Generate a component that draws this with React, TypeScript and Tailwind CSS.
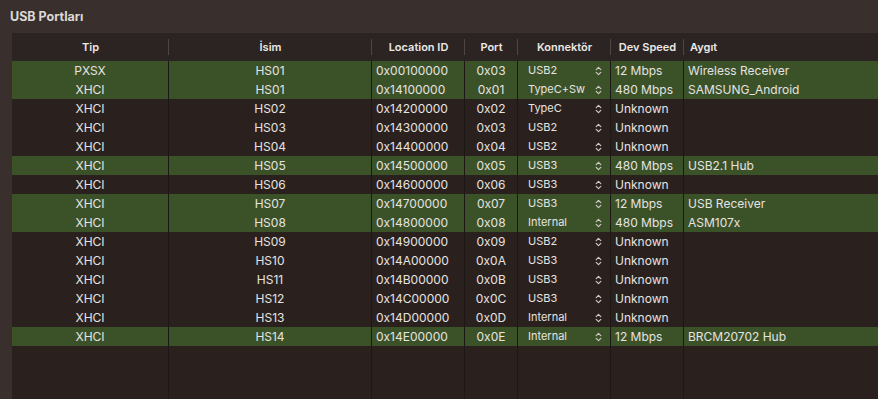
import React from "react";

type Row = {
  tip: string;
  isim: string;
  loc: string;
  port: string;
  conn: string;
  speed: string;
  device: string;
  active: boolean;
};

const rows: Row[] = [
  { tip: "PXSX", isim: "HS01", loc: "0x00100000", port: "0x03", conn: "USB2", speed: "12 Mbps", device: "Wireless Receiver", active: true },
  { tip: "XHCI", isim: "HS01", loc: "0x14100000", port: "0x01", conn: "TypeC+Sw", speed: "480 Mbps", device: "SAMSUNG_Android", active: true },
  { tip: "XHCI", isim: "HS02", loc: "0x14200000", port: "0x02", conn: "TypeC", speed: "Unknown", device: "", active: false },
  { tip: "XHCI", isim: "HS03", loc: "0x14300000", port: "0x03", conn: "USB2", speed: "Unknown", device: "", active: false },
  { tip: "XHCI", isim: "HS04", loc: "0x14400000", port: "0x04", conn: "USB2", speed: "Unknown", device: "", active: false },
  { tip: "XHCI", isim: "HS05", loc: "0x14500000", port: "0x05", conn: "USB3", speed: "480 Mbps", device: "USB2.1 Hub", active: true },
  { tip: "XHCI", isim: "HS06", loc: "0x14600000", port: "0x06", conn: "USB3", speed: "Unknown", device: "", active: false },
  { tip: "XHCI", isim: "HS07", loc: "0x14700000", port: "0x07", conn: "USB3", speed: "12 Mbps", device: "USB Receiver", active: true },
  { tip: "XHCI", isim: "HS08", loc: "0x14800000", port: "0x08", conn: "Internal", speed: "480 Mbps", device: "ASM107x", active: true },
  { tip: "XHCI", isim: "HS09", loc: "0x14900000", port: "0x09", conn: "USB2", speed: "Unknown", device: "", active: false },
  { tip: "XHCI", isim: "HS10", loc: "0x14A00000", port: "0x0A", conn: "USB3", speed: "Unknown", device: "", active: false },
  { tip: "XHCI", isim: "HS11", loc: "0x14B00000", port: "0x0B", conn: "USB3", speed: "Unknown", device: "", active: false },
  { tip: "XHCI", isim: "HS12", loc: "0x14C00000", port: "0x0C", conn: "USB3", speed: "Unknown", device: "", active: false },
  { tip: "XHCI", isim: "HS13", loc: "0x14D00000", port: "0x0D", conn: "Internal", speed: "Unknown", device: "", active: false },
  { tip: "XHCI", isim: "HS14", loc: "0x14E00000", port: "0x0E", conn: "Internal", speed: "12 Mbps", device: "BRCM20702 Hub", active: true },
];

const grid = "grid grid-cols-[157px_203px_93px_53px_93px_73px_1fr]";

const Chevron = () => (
  <svg width="7" height="10" viewBox="0 0 7 10" fill="none" stroke="#cfcac6" strokeWidth="1.2" strokeLinecap="round" strokeLinejoin="round">
    <path d="M1.2 3.6 L3.5 1.4 L5.8 3.6" />
    <path d="M1.2 6.4 L3.5 8.6 L5.8 6.4" />
  </svg>
);

const HeaderCell = ({ label, left, last }: any) => (
  <div className={`relative flex items-center h-[28px] ${left ? "justify-start pl-[6px]" : "justify-center"}`}>
    <span>{label}</span>
    {!last && <div className="absolute right-0 top-[6px] h-[16px] w-px bg-[#4d4543]" />}
  </div>
);

export default function App() {
  return (
    <div
      className="w-[878px] h-[399px] overflow-hidden bg-[#39302d] text-[#e6e3e0]"
      style={{ fontFamily: "Inter, 'Liberation Sans', sans-serif" }}
    >
      <div className="h-[33px] pl-[10px] pt-[8px] text-[12.5px] font-bold text-[#dcd8d5] leading-[17px]">
        USB Portları
      </div>
      <div className="ml-[12px] h-[366px] bg-[#2a211f] flex flex-col">
        <div className={`${grid} bg-[#2b2422] text-[11px] font-semibold text-[#ebe8e5]`}>
          <HeaderCell label="Tip" />
          <HeaderCell label="İsim" />
          <HeaderCell label="Location ID" />
          <HeaderCell label="Port" />
          <HeaderCell label="Konnektör" />
          <HeaderCell label="Dev Speed" />
          <HeaderCell label="Aygıt" left last />
        </div>
        <div className={`${grid} flex-1 text-[12px] leading-[19px]`} style={{ gridAutoRows: "19px" }}>
          {rows.map((r, i) => {
            const bg = r.active ? "bg-[#3b5229]" : "bg-[#2a211f]";
            const cell = `${bg} border-r border-[#1d1816] h-[19px] whitespace-nowrap overflow-hidden`;
            return (
              <React.Fragment key={i}>
                <div className={`${cell} text-center`}>{r.tip}</div>
                <div className={`${cell} text-center`}>{r.isim}</div>
                <div className={`${cell} pl-[4px]`}>{r.loc}</div>
                <div className={`${cell} text-center`}>{r.port}</div>
                <div className={`${cell} flex items-center justify-between pl-[10px] pr-[8px] text-[11px]`}>
                  <span>{r.conn}</span>
                  <Chevron />
                </div>
                <div className={`${cell} pl-[4px]`}>{r.speed}</div>
                <div className={`${bg} h-[19px] pl-[4px] whitespace-nowrap`}>{r.device}</div>
              </React.Fragment>
            );
          })}
          {[0, 1, 2].map((k) => (
            <React.Fragment key={"f" + k}>
              <div className="border-r border-[#1d1816]" />
              <div className="border-r border-[#1d1816]" />
              <div className="border-r border-[#1d1816]" />
              <div className="border-r border-[#1d1816]" />
              <div className="border-r border-[#1d1816]" />
              <div className="border-r border-[#1d1816]" />
              <div />
            </React.Fragment>
          ))}
        </div>
      </div>
    </div>
  );
}
